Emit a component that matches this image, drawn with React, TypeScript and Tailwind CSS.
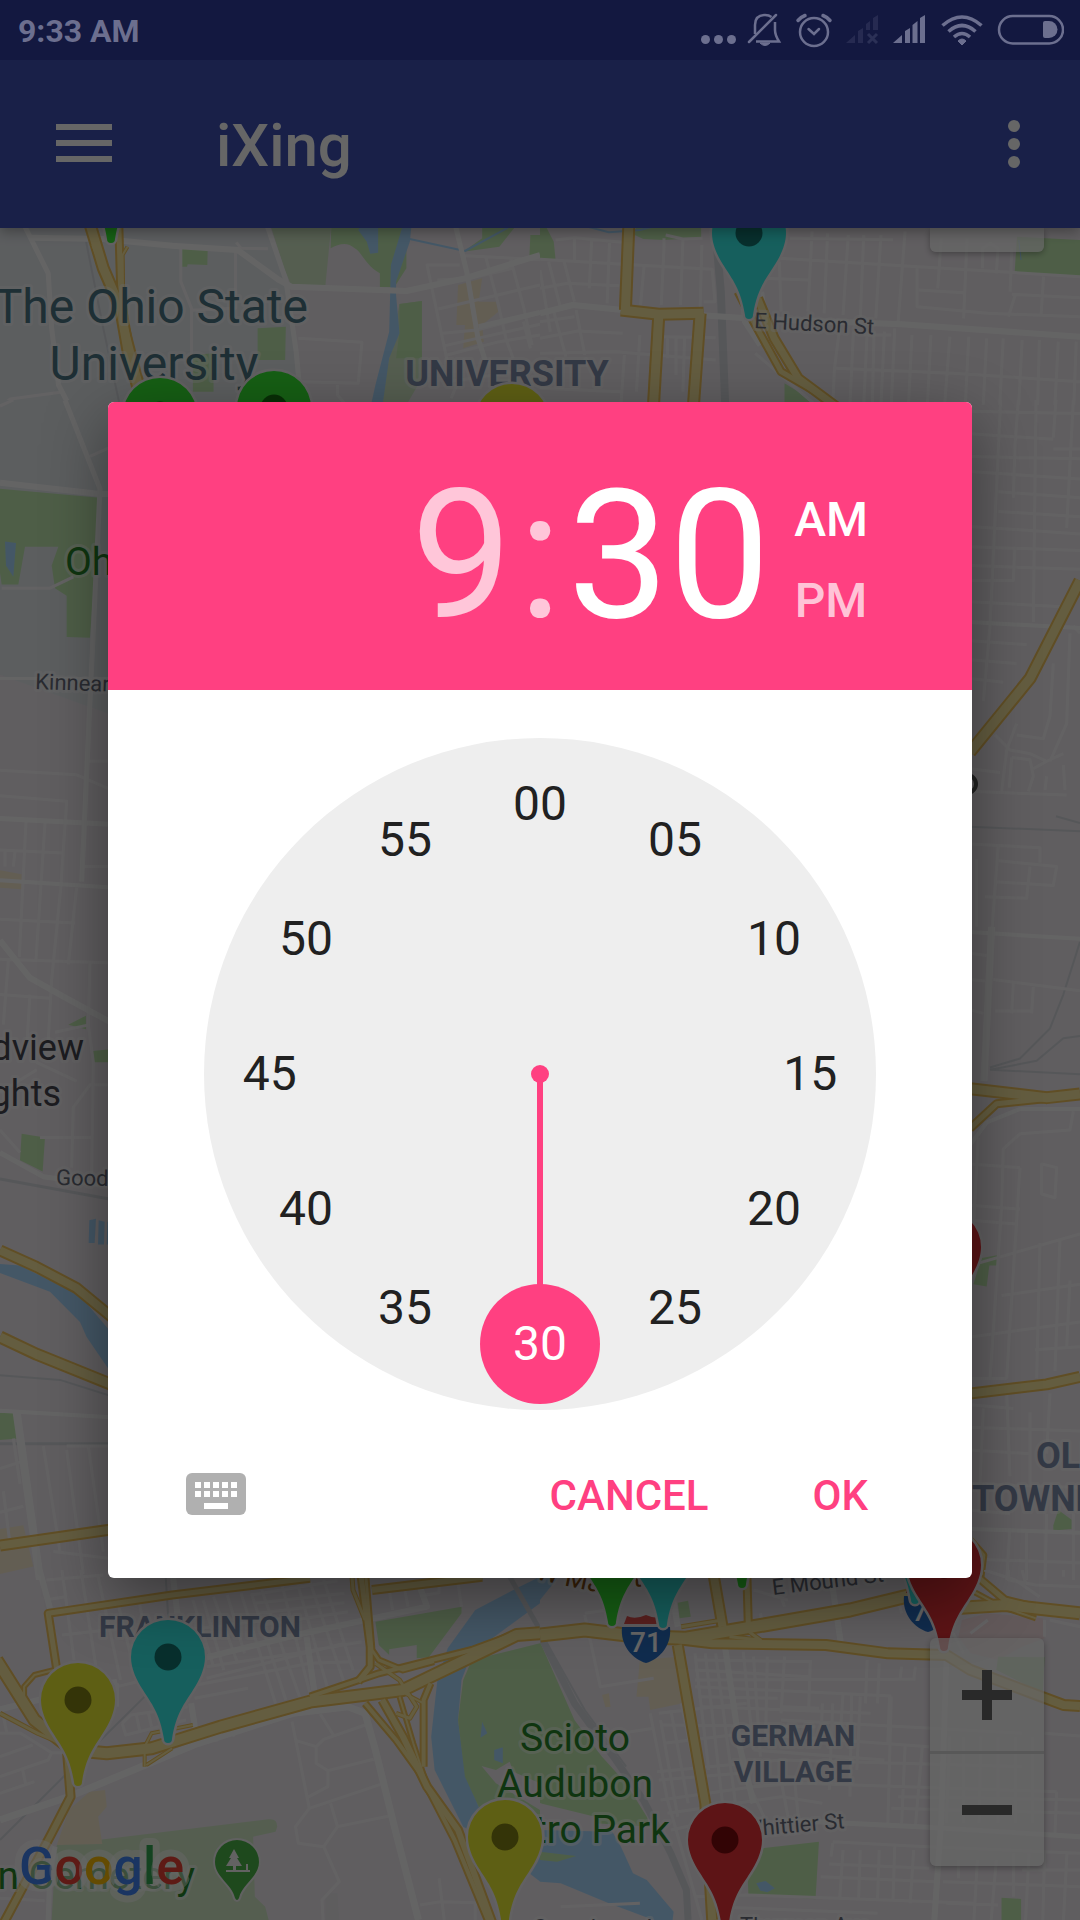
import React from "react";

const WATER = "#aadaff";
const PARK = "#c3ecb2";
const LAWN = "#d4ebc9";
const BEIGE = "#f7ead0";
const RAIL = "#d6dadf";

type Stroke = [string, number];
type Area = [string, string];
type TileData = {
  transform: string;
  clip: [number, number];
  areas: Area[];
  rails: Stroke[];
  water: Stroke[];
  minor: string[];
  streets: Stroke[];
  highways: Stroke[];
};

const northWest: TileData = {
  transform: "translate(0 225) scale(0.3444 0.3333)",
  clip: [1568, 620],
  areas: [
    ["M0 0H780L840 190L870 490L880 620H0Z", "#e6eaee"],
    ["M785 0H962L945 180H845L825 130Z", LAWN],
    ["M962 0H1180V130L1145 187H1103V145C1060 120 1050 80 1030 70C1010 50 985 55 960 70Z", PARK],
    ["M1040 15L1050 0H1098V83L1075 86L1065 50Z", WATER],
    ["M1160 237L1225 228V460L1180 540H1100L1130 400Z", LAWN],
    ["M1160 237L1225 228V400H1150L1160 320Z", PARK],
    ["M1170 0H1195L1190 50L1150 170V210L1160 325L1130 400L1100 620H1060L1090 480L1130 320L1135 120Z", WATER],
    ["M527 70L603 75L602 120L545 118L543 125H527Z", PARK],
    ["M748 310L830 305L828 405H748Z", PARK],
    ["M560 390L620 385V500H560Z", PARK],
    ["M1345 80L1400 40V0H1500L1450 65Z", PARK],
    ["M1540 30H1568V97H1537Z", PARK],
    ["M1330 180L1400 160L1390 230H1440L1447 260L1400 300L1405 350L1345 370L1350 300L1325 300Z", BEIGE],
  ],
  rails: [["M250 50L300 310L360 600", 2]],
  water: [["M1190 42L1350 78L1475 8", 2]],
  minor: [
    "M686 52L700 70L778 71M525 68V170L556 250V400M684 80V250L556 256M866 340L1051 352L1040 475L866 470M980 480V510L1000 535",
    "M1335 120H1240L1305 440M1270 165L1365 160L1488 130M1273 252L1568 180M1286 325L1385 315L1568 265M1292 362L1568 298M1298 390L1450 350L1568 330",
    "M1350 92L1568 104M1410 95L1445 230L1470 345L1490 400M1482 100L1520 245L1545 360M1520 290L1540 370M1300 470L1568 430M1310 520L1330 470",
    "M0 545L30 522L175 502",
  ],
  streets: [
    ["M90 38L300 42L500 62L690 75L810 165L845 185L1180 198L1350 160L1568 90", 6],
    ["M70 0L140 145L150 310L170 480L230 600", 5],
    ["M775 0L830 165L860 380L880 600", 5],
    ["M1322 0L1355 140L1388 340L1410 410", 5],
    ["M1390 305L1568 262", 5],
  ],
  highways: [
    ["M262 0L300 130L350 250L372 380L430 600", 13],
    ["M345 0L350 180L362 300L392 420L440 600", 9],
    ["M268 60L330 220L365 330", 4],
    ["M370 65L356 90L358 260", 4],
  ],
};

const northEast: TileData = {
  transform: "translate(540 225) scale(0.3444 0.3333)",
  clip: [1568, 620],
  areas: [
    ["M0 0H15L40 50L45 102H0Z", PARK],
    ["M280 0H468V38L360 45L300 42L275 30Z", PARK],
    ["M1385 35L1568 45V155L1378 145Z", PARK],
    ["M710 475L750 500L800 545H710Z", PARK],
  ],
  rails: [["M510 20L525 200L540 600", 8]],
  water: [
    ["M40 5L120 0L200 22L290 15L340 2", 2],
    ["M1390 45L1397 105", 1],
  ],
  minor: [
    "M365 30L415 42L472 40M360 40V70M45 45L100 38L240 52M100 40V105M150 45L143 190M202 50L195 235M0 103L240 118L500 133L508 230H475M302 125L292 240M360 70L352 240M415 45L408 240M470 60L465 250",
    "M0 190L80 175L230 182M25 110L60 250M70 110L100 230M0 135L30 320M0 290L100 275M0 340L110 318L240 325M40 260L75 395M105 255L130 390M0 385L220 380L510 405M360 335L510 338M0 490L235 500M290 330L280 500M370 335V400M395 335V450M420 335L415 500M245 390L235 540",
    "M725 40L1025 44M790 20L778 260M835 25L825 265M895 30L880 270M940 30L930 280M990 30L975 280M1060 20L1040 290M695 100L1050 122L1568 155M645 160L780 165M695 110L700 260",
    "M1165 40L1155 190M1240 40L1230 280M1095 130V245L1300 265L1568 275M1100 195L1230 203M1285 130V70L1308 55L1330 70L1325 145M1370 70L1365 200M1370 208L1568 218M1462 155L1455 270M1360 275L1380 210",
    "M870 310L855 430L850 540M910 320L900 540M950 320L940 540M970 320L965 540M1000 320L990 540M1030 310L1020 540M1080 330L1070 540M1135 330L1125 540M1190 335L1175 540M1245 335L1235 540M1297 340L1287 540M1345 340L1335 540M1400 345L1390 540M1450 345L1445 540M1505 350L1495 540M1557 350L1550 540M860 430L1200 445L1568 470M940 330H1020M625 385L800 540",
  ],
  streets: [
    ["M0 265L95 240L240 255L600 280", 6],
    ["M590 200L595 290L640 360", 6],
    ["M645 200L655 290", 4],
    ["M600 280L1050 298L1568 335", 6],
  ],
  highways: [
    ["M258 0L248 255", 13],
    ["M235 255L345 268L475 265", 13],
    ["M345 268L325 620", 13],
    ["M465 265L440 620", 13],
    ["M575 200L620 290L700 440L800 500L930 600", 9],
    ["M632 220L680 340L750 460L880 560", 11],
  ],
};

const west: TileData = {
  transform: "translate(0 400) scale(0.3333 0.7526)",
  clip: [345, 1568],
  areas: [
    ["M0 0H345V420L0 365Z", "#e6eaee"],
    ["M0 118L300 130L270 316L200 315V260L165 250L155 220L175 195H75L55 245H5L0 230Z", PARK],
    ["M15 188L48 190L40 235L18 220Z", WATER],
    ["M0 625L65 630V650L0 648Z", BEIGE],
    ["M65 975L135 980L128 1025L60 1010Z", PARK],
    ["M205 830L258 818V836Z", PARK],
    ["M278 865L345 862V880H278Z", PARK],
    ["M0 1148L60 1150L240 1190L345 1245V1300L260 1245L240 1225L150 1185L0 1160Z", WATER],
    ["M268 1090L288 1088L284 1120H266ZM296 1090L314 1092L312 1122H294ZM322 1092H345V1122H320Z", WATER],
    ["M0 1346L40 1345L55 1380L0 1382Z", PARK],
    ["M0 1500L70 1495L100 1550L0 1560Z", BEIGE],
  ],
  rails: [
    ["M0 1035L345 1063", 3],
    ["M0 1296L180 1302L345 1325", 2],
    ["M0 1387H345", 3],
  ],
  water: [],
  minor: [
    "M0 492L230 498L345 520M0 526L200 533L182 650L155 770L145 850M0 598L190 602M78 560L58 740M135 562L108 745M0 690L225 695M0 743L345 748M230 648L205 750M265 480H345M248 620H345M0 790L150 795M25 745L10 830M90 790L80 860M165 840L270 830M270 745L265 830L280 880L275 1040M215 1020L220 940L270 910H345M110 880L230 905M0 920L110 890M120 980H275M0 970L60 1000",
    "M5 250H150L220 235M15 600V620M45 600L40 620M0 1420L70 1410M130 1390L180 1530M200 1395L250 1560M265 1390L310 1530M200 1390H345M0 1478L70 1470M10 1450L30 1520M40 1380L60 1440M160 1530L345 1540M345 60L270 75",
    "M40 0L0 8",
  ],
  streets: [
    ["M0 110L300 125H345", 6],
    ["M195 0L300 118L270 400L245 640", 5],
    ["M0 556L345 564", 5],
    ["M0 370H345", 3],
    ["M0 638L345 648", 4],
    ["M0 718L90 768L200 795L345 830", 6],
    ["M0 1000L130 1032L345 1045", 5],
    ["M50 1345L120 1568", 8],
    ["M0 1343L345 1352", 4],
  ],
  highways: [
    ["M0 1130L110 1152L230 1180L345 1222", 12],
    ["M0 1245L110 1268L345 1310", 13],
    ["M0 1522L345 1500", 12],
  ],
};

const east: TileData = {
  transform: "translate(970 400) scale(0.3333 0.7526)",
  clip: [330, 1568],
  areas: [
    ["M10 1175L35 1140L85 1136V1150H58L50 1178Z", PARK],
    ["M250 1495L265 1475L305 1488V1500L250 1502Z", PARK],
  ],
  rails: [
    ["M0 567L330 573M258 553L330 562", 2],
    ["M60 887L150 875L240 835L280 790L330 720M60 890L200 878L280 848L330 845M60 890L330 896", 2],
  ],
  water: [],
  minor: [
    "M92 0L60 300L40 400M145 0L135 60L130 130M198 0L190 295M258 0L250 50M0 15L330 18M0 45L250 52M250 65H330M0 75L330 78M0 95L330 105M85 122L330 130M85 148L330 155M0 168L330 178M0 195L330 200M0 220L330 225M135 195L130 240H0M0 268L290 275M290 170L310 0M0 320L170 325M0 345L140 350M0 370L100 375",
    "M75 445L120 465L180 470L230 480L280 470M95 520L110 465L140 430M125 475L180 478L190 500L175 520M125 475L118 515M190 490L230 480M230 500L225 518M0 520L290 525M300 310L290 430L240 480M310 300L330 310M250 350L240 420L220 450L140 445M0 490L90 495M280 485L285 518",
    "M0 590L210 595V615M85 590L65 710M80 612L260 620L250 645L75 640M180 620L170 662L45 660M20 610V700M0 735L50 738M0 770L45 772M70 770L330 785M130 775L125 815M190 780L185 815M75 812H185M0 810L40 815",
    "M310 945L300 970L150 975L100 995L95 1070L80 1170L60 1300M150 1020L130 1160L110 1300M215 1015L260 1020L255 1060L215 1055ZM0 1015L150 1020M0 1070L150 1075M0 1090L140 1095M25 980L10 1100M0 1150L330 1108M210 1120L200 1300M270 1115L255 1290M95 1190L330 1175M0 1245L330 1225M300 1170L290 1260M195 1262L330 1258M0 1300H110",
    "M0 1335L130 1340M110 1320L120 1430M180 1345V1440M240 1320L230 1400M0 1365L330 1370M40 1340L30 1440M0 1395L180 1400M0 1440L330 1445M0 1475L120 1480M120 1500L110 1568M230 1480L225 1568M310 1480V1568M0 1540L330 1545M170 1505V1568",
  ],
  streets: [
    ["M0 295L330 303", 4],
    ["M0 707L330 716", 4],
    ["M65 700L42 905", 7],
    ["M0 990L50 960L150 942H330", 4],
    ["M0 1500L330 1505", 4],
  ],
  highways: [
    ["M0 468L180 370L330 240", 13],
    ["M0 915L230 927L330 922", 13],
    ["M0 968L80 935L230 928", 9],
    ["M0 1320L230 1308L330 1298", 12],
    ["M0 1515L40 1535L30 1568", 8],
  ],
};

const southWest: TileData = {
  transform: "translate(0 1570) scale(0.3444 0.3333)",
  clip: [1568, 1050],
  areas: [
    ["M1090 155L1340 110V130L1245 262L1210 265V225L1130 238V255L1100 225Z", PARK],
    ["M1568 20L1500 55L1380 120L1300 235L1270 330L1252 500L1262 600L1345 770L1400 800L1568 935V640L1390 710L1350 600L1330 450L1340 330L1370 250L1568 100Z", WATER],
    ["M1370 270L1568 220V790L1480 720L1390 710L1350 620L1330 450L1345 330Z", PARK],
    ["M1398 588L1440 600L1480 575L1490 605L1568 640V720L1440 640Z", "#f0eaf0"],
    ["M1400 455L1415 490L1395 503ZM1435 540L1460 532V580L1435 570Z", WATER],
    ["M165 825L780 748Q805 745 805 770L800 785L735 800L740 980L770 1010L780 1050H150L158 900Z", LAWN],
    ["M260 665L305 660L310 710L285 740L297 822L165 825L200 720Z", BEIGE],
    ["M945 970L980 970L985 1050H945Z", "#ebe9ec"],
  ],
  rails: [
    ["M480 0L490 170M420 380L180 625L0 810", 2],
    ["M1480 20L1568 180", 5],
  ],
  water: [],
  minor: [
    "M135 30L300 15M145 88L190 80M180 195L310 180M180 0L215 270M235 0L280 300M285 20L350 330M340 90L390 300M405 100L440 290M560 90L620 290M590 90L650 300M620 80L690 280M660 75L710 250M700 70L800 400M730 70L830 390M760 60L870 380M820 50L900 370M865 45L950 350M900 35L1000 340M940 30L1025 300",
    "M730 75L980 32M740 100L1000 70M750 130L1000 98M760 165L1010 125M540 180L860 140M600 290L860 250L1050 215M570 345L900 280L1020 275M600 325L1000 220M565 385L720 355M340 350L420 330M355 460L380 435L545 410M355 460L365 495L540 450M395 430L405 480M430 425L440 470M470 420L480 450",
    "M620 485L630 515M670 475L680 500M1330 40L1340 110M1130 60L1140 120M1175 60L1185 110M1235 75L1275 68V45M0 560L95 525M0 490L60 490L150 548L140 570L0 620M65 595L75 645M0 670L100 635M10 440L20 490M150 548H190",
    "M848 455L898 715L858 770L866 820L940 830L985 935L935 990L938 1050M860 512L918 530V580L952 602V650L893 682M918 530L940 508L1060 465M952 602L1085 568M930 432L968 495M898 715L1105 643M960 700L980 770L940 830M980 770L1130 738M1275 925L1290 1050M1220 1005L1280 995L1380 998V1050M0 985L130 992",
  ],
  streets: [
    ["M115 0L145 115", 6],
    ["M500 0L515 130M555 400L575 530", 6],
    ["M0 418L130 385L340 335", 6],
    ["M340 340V410", 4],
    ["M600 262L860 195L1240 110L1215 40", 6],
    ["M890 200L912 360", 6],
    ["M0 750L200 680L575 520L850 430L1010 410L1060 430L1090 540L1150 790L1215 1050", 7],
    ["M160 830L145 900L140 1050", 5],
  ],
  highways: [
    ["M165 300L140 130L500 75L900 25", 9],
    ["M175 295L100 315L70 350V400L150 500", 6],
    ["M-10 270L100 450L210 540L310 550L440 535L640 470L900 395L1170 360L1270 310L1500 195L1568 190", 14],
    ["M900 380L1100 310L1370 240L1500 190", 8],
    ["M0 430L110 490L200 530", 5],
    ["M195 550L205 680L150 790L0 1080", 10],
    ["M1060 -10L1080 240L1100 270L1170 300L1260 275", 7],
    ["M1045 -10L1075 230L1075 290L1040 335", 9],
    ["M1020 -10L1025 60L1060 150", 5],
    ["M1080 60L1400 20", 10],
    ["M1090 280L1160 330L1210 410L1190 445L1150 430", 5],
    ["M1060 400L1150 510L1220 610L1320 810L1420 1060", 8],
    ["M1110 390L1170 500L1240 650L1330 780L1430 1060", 10],
    ["M1160 380L1200 520L1235 630", 6],
    ["M1250 340L1230 390V590", 8],
    ["M1175 370L1230 400", 4],
    ["M560 465L440 490L420 530V590M500 535L425 585", 4],
  ],
};

const southEast: TileData = {
  transform: "translate(540 1570) scale(0.3444 0.3333)",
  clip: [1568, 1050],
  areas: [
    ["M0 0H70L0 90Z", WATER],
    ["M0 215L100 450L180 560L250 640L310 740L320 770L160 760L0 700Z", PARK],
    ["M0 700L160 740L170 780L0 790Z", "#f0eaf0"],
    ["M0 780L210 785L235 830L270 910L310 930L388 1025L385 1050H330L200 1000L60 940L0 935Z", WATER],
    ["M0 845L105 858L50 875L0 870Z", PARK],
    ["M400 98L430 92L438 140L405 145Z", PARK],
    ["M290 270L400 260L415 400L320 420L315 380H280Z", BEIGE],
    ["M180 375L200 370L205 410L190 412Z", BEIGE],
    ["M600 840L810 815L800 988L605 972Z", PARK],
    ["M628 940L655 933L682 955L660 967L640 962Z", WATER],
    ["M1340 983L1397 987V1050H1340Z", PARK],
    ["M1225 150L1300 130L1460 145L1465 205L1400 230L1330 270L1250 250L1215 200Z", "#f4dfe2"],
    ["M1330 260L1465 262L1460 370L1325 300Z", PARK],
  ],
  rails: [
    ["M0 195L100 400L220 570L300 690L380 850L425 960L430 1050", 7],
    ["M15 210L130 420L250 590", 2],
  ],
  water: [],
  minor: [
    "M130 135L175 350L330 325M130 130L230 115M235 490L330 475M60 1010L290 1000M450 250L490 600M480 250L530 700M510 250L570 720M590 245L620 540M620 260L640 560M660 260L655 510M710 260L700 430M785 270L780 420M820 400L815 520M850 400L840 660M880 370L870 520M905 370L900 680M930 380L920 600M950 270L945 400M985 280L980 400M1015 380L1010 520M1050 290L1045 330M1090 290L1085 330",
    "M450 270L790 275M450 300L780 320M450 330L1090 328M450 350L1020 378M460 380L690 385M705 410L810 415M470 410L960 430M345 430L600 400M350 465L800 470M700 450L1400 490M360 520L600 490L1130 530M620 540L1000 570M340 605L700 570L1400 590M345 630L580 610M350 690L620 650L760 640L1500 665M370 730L700 680L820 700M380 780L560 740M1020 380L1010 760M1060 530L1050 760M1110 530L1090 770",
    "M320 430L370 690L440 940L470 1050M380 420L430 700M410 400L470 700M350 450L400 740M590 720L620 820M610 650L650 740M700 630L720 740M740 640L750 740M1020 715L1568 730M1040 680L1568 690M1190 500L1180 760M1230 500V760M1280 500L1275 760M1330 500V760M1380 500V760M1430 500V760M1465 490L1568 498M1500 665L1495 800",
    "M840 882L1130 895M815 920L1150 935M850 815L1080 828L1568 850M850 820L845 860M880 840L870 990M930 840L925 990M985 840L980 990M1030 830L1025 990M1085 840L1075 1000M1215 870V925M1270 870L1260 1050M1325 870L1310 1050M1375 850V980M1420 850L1410 1050M1465 850L1460 1050M1530 850L1520 1050M1170 935L1568 950M1180 1000L1330 1005M600 975L1260 1000M500 1010L980 1030M450 980L600 975M1400 900H1568",
    "M1290 0L1380 30L1450 80M1360 0V30L1440 45L1568 50M1465 130L1500 140M1465 150V200M1480 150L1568 170M1400 0L1410 40M1520 0V20M1300 150L1250 190M1200 190L1230 250",
    "M640 130L650 180M1040 90L1050 130M700 80L710 110M390 100L400 150M620 60L720 90",
  ],
  streets: [
    ["M845 20L875 230", 6],
    ["M535 215L580 530L620 700", 6],
    ["M1180 270L1165 750L1145 1050", 6],
    ["M700 750L1100 770L1568 800", 5],
    ["M385 80L400 170", 6],
  ],
  highways: [
    ["M0 195L130 180L290 200L420 205L650 165L900 120L1080 75", 15],
    ["M380 205L500 220L830 225L1010 250L1180 255L1250 300L1430 370L1520 405L1568 408", 12],
    ["M500 -10L530 170", 12],
    ["M600 -10L605 170", 9],
    ["M410 170L530 150", 5],
    ["M400 225L480 700L500 1050", 12],
    ["M550 200L640 210L600 180", 5],
    ["M1200 115L1350 105L1568 130", 14],
    ["M1270 20L1350 90L1470 120", 9],
    ["M1250 60L1340 110L1440 145", 6],
    ["M1090 85L1100 110", 6],
  ],
};

const tiles = [northWest, northEast, west, east, southWest, southEast];

function Line({ d, w, color }: { d: string; w: number; color: string }) {
  return (
    <path d={d} fill="none" stroke={color} strokeWidth={w} strokeLinejoin="round" vectorEffect="non-scaling-stroke" />
  );
}

function Tile({ tile, id }: { tile: TileData; id: string }) {
  return (
    <g transform={tile.transform} clipPath={`url(#${id})`}>
      <clipPath id={id}>
        <rect width={tile.clip[0]} height={tile.clip[1]} />
      </clipPath>
      {tile.areas.map(([d, fill], i) => <path key={i} d={d} fill={fill} />)}
      {tile.rails.map(([d, w], i) => <Line key={i} d={d} w={w} color={RAIL} />)}
      {tile.water.map(([d, w], i) => <Line key={i} d={d} w={w} color={WATER} />)}
      {tile.minor.map((d, i) => <Line key={i} d={d} w={3} color="#f8f6f8" />)}
      {tile.streets.map(([d, w], i) => <Line key={i} d={d} w={w} color="#fbfbfb" />)}
      {tile.highways.map(([d, w], i) => <Line key={i} d={d} w={w} color="#efc35c" />)}
      {tile.highways.map(([d, w], i) => <Line key={i} d={d} w={w < 6 ? w - 2 : w - 4} color="#fbe9a0" />)}
    </g>
  );
}

const PIN = {
  red: ["#e83237", "#7d0a0d"],
  green: ["#37ee34", "#14750f"],
  teal: ["#37eee8", "#147570"],
  yellow: ["#ecee32", "#828216"],
} as const;

function Pin({ x, y, color }: { x: number; y: number; color: keyof typeof PIN }) {
  const [body, dot] = PIN[color];
  return (
    <g transform={`translate(${x} ${y})`}>
      <path
        d="M-37 0A37 37 0 0 1 37 0C37 12 31 24 25 33C17 46 8 56 4 82A4 4 0 0 1 -4 82C-8 56 -17 46 -25 33C-31 24 -37 12 -37 0Z"
        fill={body}
        stroke="#f6f2f6"
        strokeWidth="5"
        paintOrder="stroke"
      />
      <circle r="13.5" fill={dot} />
    </g>
  );
}

const labelKinds = {
  campus: { size: 48, fill: "#4b7684", weight: 400 },
  district: { size: 36, fill: "#808ead", weight: 700 },
  village: { size: 30, fill: "#808ead", weight: 700 },
  park: { size: 39, fill: "#27842a", weight: 400 },
  town: { size: 36, fill: "#464751", weight: 400 },
  street: { size: 22, fill: "#686c7a", weight: 400 },
  place: { size: 26, fill: "#915514", weight: 400 },
} as const;

function Label({ x, y, kind, anchor = "start", rotate = 0, children }: {
  x: number; y: number; kind: keyof typeof labelKinds; anchor?: "start" | "middle" | "end"; rotate?: number; children: string;
}) {
  const k = labelKinds[kind];
  return (
    <text
      transform={`translate(${x} ${y}) rotate(${rotate})`}
      fontSize={k.size}
      fontWeight={k.weight}
      fill={k.fill}
      stroke="#ffffff"
      strokeOpacity="0.45"
      strokeWidth="6"
      strokeLinejoin="round"
      paintOrder="stroke"
      textAnchor={anchor}
    >
      {children}
    </text>
  );
}

function Shield({ x, y }: { x: number; y: number }) {
  return (
    <g transform={`translate(${x} ${y})`}>
      <path d="M2 9L5 1Q13 5 24 0Q35 5 43 1L46 9Z" fill="#e0504f" />
      <path d="M0 12H48C50 30 38 44 24 48C10 44 -2 30 0 12Z" fill="#2a6fc4" />
      <text x="24" y="37" fontSize="28" fontWeight="500" fill="#ffffff" textAnchor="middle">71</text>
    </g>
  );
}

function CityMap() {
  return (
    <svg
      className="absolute inset-0 h-full w-full"
      viewBox="0 228 1080 1692"
      preserveAspectRatio="xMidYMin slice"
      role="img"
      aria-label="Map of Columbus"
    >
      <rect y="228" width="1080" height="1692" fill="#f0eaf0" />
      {tiles.map((t, i) => <Tile key={i} tile={t} id={`tile-${i}`} />)}

      <Label x={308} y={323} kind="campus" anchor="end">The Ohio State</Label>
      <Label x={154} y={380} kind="campus" anchor="middle">University</Label>
      <Label x={507} y={386} kind="district" anchor="middle">UNIVERSITY</Label>
      <Label x={754} y={328} kind="street" rotate={3}>E Hudson St</Label>
      <Label x={65} y={575} kind="park">Ohio Stadium</Label>
      <Label x={35} y={689} kind="street" rotate={2}>Kinnear Rd</Label>
      <Label x={84} y={1060} kind="town" anchor="end">Grandview</Label>
      <Label x={61} y={1106} kind="town" anchor="end">Heights</Label>
      <Label x={56} y={1185} kind="street" rotate={1}>Goodale Blvd</Label>
      <Label x={1036} y={1468} kind="district">OLDE</Label>
      <Label x={972} y={1511} kind="district">TOWNE</Label>
      <Label x={200} y={1637} kind="village" anchor="middle">FRANKLINTON</Label>
      <Label x={575} y={1751} kind="park" anchor="middle">Scioto</Label>
      <Label x={575} y={1797} kind="park" anchor="middle">Audubon</Label>
      <Label x={670} y={1843} kind="park" anchor="end">Metro Park</Label>
      <Label x={793} y={1746} kind="village" anchor="middle">GERMAN</Label>
      <Label x={793} y={1782} kind="village" anchor="middle">VILLAGE</Label>
      <Label x={845} y={1828} kind="street" anchor="end" rotate={-5}>Whittier St</Label>
      <Label x={773} y={1595} kind="street" rotate={-7}>E Mound St</Label>
      <Label x={535} y={1579} kind="place" rotate={12}>W Main</Label>
      <Label x={618} y={1588} kind="place" rotate={-4}>St</Label>
      <Label x={533} y={1935} kind="street">Greenlawn Ave</Label>
      <Label x={740} y={1933} kind="street">Thurman Ave</Label>
      <Label x={195} y={1889} kind="park" anchor="end">Green Lawn Cemetery</Label>
      <circle cx="967" cy="784" r="9" fill="none" stroke="#555555" strokeWidth="4" />

      <Shield x={622} y={1615} />
      <Shield x={904} y={1584} />

      <Pin x={111} y={157} color="green" />
      <Pin x={749} y={233} color="teal" />
      <Pin x={160} y={415} color="green" />
      <Pin x={274} y={408} color="green" />
      <Pin x={512} y={421} color="yellow" />
      <Pin x={944} y={1247} color="red" />
      <Pin x={742} y={1502} color="green" />
      <Pin x={915} y={1518} color="teal" />
      <Pin x={612} y={1540} color="green" />
      <Pin x={663} y={1542} color="teal" />
      <Pin x={944} y={1565} color="red" />
      <Pin x={168} y={1657} color="teal" />
      <Pin x={78} y={1700} color="yellow" />
      <Pin x={505} y={1837} color="yellow" />
      <Pin x={725} y={1840} color="red" />

      <g transform="translate(237 1862)">
        <path
          d="M-22 0A22 22 0 0 1 22 0C22 15 5 22 2 36Q0 40 -2 36C-5 22 -22 15 -22 0Z"
          fill="#4db64a"
          stroke="#f2f2f2"
          strokeWidth="4"
          paintOrder="stroke"
        />
        <path d="M-3 -13L-8 -4H-6L-11 4H-4V8H-11V10H13V8H11V2H9V8H-1V4H5L0 -4H2Z" fill="#f4f4f4" />
      </g>

      <text
        x="19"
        y="1884"
        fontSize="52"
        fontWeight="500"
        stroke="#ffffff"
        strokeOpacity="0.5"
        strokeWidth="14"
        strokeLinejoin="round"
        paintOrder="stroke"
      >
        <tspan fill="#4285f4">G</tspan>
        <tspan fill="#ea4335">o</tspan>
        <tspan fill="#fbbc05">o</tspan>
        <tspan fill="#4285f4">g</tspan>
        <tspan fill="#34a853">l</tspan>
        <tspan fill="#ea4335">e</tspan>
      </text>
    </svg>
  );
}

function StatusIcon({ x, w, children }: { x: number; w: number; children: React.ReactNode }) {
  return (
    <svg width={w} height="36" viewBox={`${x} 12 ${w} 36`} fill="none" stroke="currentColor" aria-hidden="true">
      {children}
    </svg>
  );
}

function StatusBar() {
  return (
    <div className="relative z-20 flex h-[60px] shrink-0 items-center justify-between bg-[#131840] pr-4 pl-[18px] text-[#6c6f8f]">
      <span className="mt-0.5 text-[32px] leading-none font-bold">9:33 AM</span>
      <div className="flex items-center">
        <StatusIcon x={700} w={46}>
          <g fill="currentColor" stroke="none">
            <circle cx="705.5" cy="39.5" r="4.5" />
            <circle cx="718.5" cy="39.5" r="4.5" />
            <circle cx="731.5" cy="39.5" r="4.5" />
          </g>
        </StatusIcon>
        <StatusIcon x={746} w={48}>
          <path d="M749 42L776 15" strokeWidth="2.5" strokeLinecap="round" />
          <path d="M755 34V25C755 18 759 15 765 15Q769 15 771.5 17M775 22V30Q775 35 779 41.5H756" strokeWidth="2.5" />
          <path d="M760 43H770Q765 48 760 43Z" fill="currentColor" />
        </StatusIcon>
        <StatusIcon x={794} w={50}>
          <circle cx="814" cy="32" r="14" strokeWidth="2.5" />
          <path d="M808.5 29L814 34L819 29" strokeWidth="2.5" strokeLinecap="round" />
          <path d="M798 20.5Q801 17 805 15.5M823 15.5Q827 17 830 20.5" strokeWidth="3.5" strokeLinecap="round" />
        </StatusIcon>
        <StatusIcon x={844} w={46}>
          <g fill="currentColor" stroke="none" opacity="0.22">
            <path d="M846 43L855 35V43ZM858 43V31L863 28V43ZM866 30V24L870 21V30ZM873 30V18L878 15V30Z" />
          </g>
          <path d="M868 34L877 43M877 34L868 43" strokeWidth="3" opacity="0.28" />
        </StatusIcon>
        <StatusIcon x={890} w={48}>
          <path d="M893 43L902 35V43ZM905 43V31L910 28V43ZM912.5 43V25L917.5 21V43ZM920 43V18L925 15V43Z" fill="currentColor" stroke="none" />
        </StatusIcon>
        <StatusIcon x={938} w={58}>
          <path d="M942.5 25.5Q962 8.5 981.5 25.5M948.5 31.5Q962 19.5 975.5 31.5M954 37Q962 30 970 37" strokeWidth="3.6" />
          <path d="M962 45L958 41Q962 37 966 41Z" fill="currentColor" />
        </StatusIcon>
        <StatusIcon x={996} w={68}>
          <rect x="999" y="16" width="64" height="27.5" rx="13.7" strokeWidth="2.5" />
          <path d="M1045 21H1049A8.500 8.500 0 0 1 1049 38H1045Q1043 38 1043 36V23Q1043 21 1045 21Z" fill="currentColor" stroke="none" />
        </StatusIcon>
      </div>
    </div>
  );
}

function AppBar() {
  return (
    <header className="relative z-10 flex h-[168px] shrink-0 items-center bg-[#3f51b5] px-14 text-white shadow-[0_4px_12px_rgba(0,0,0,0.3)]">
      <button type="button" aria-label="Open menu" className="-mt-0.5 flex w-14 flex-col gap-2.5">
        <span className="h-1.5 bg-white" />
        <span className="h-1.5 bg-white" />
        <span className="h-1.5 bg-white" />
      </button>
      <h1 className="mt-1 ml-26 flex-1 text-[60px] leading-none font-medium">iXing</h1>
      <button type="button" aria-label="More options" className="mr-1 flex flex-col gap-1.5">
        <span className="size-3 rounded-full bg-white" />
        <span className="size-3 rounded-full bg-white" />
        <span className="size-3 rounded-full bg-white" />
      </button>
    </header>
  );
}

function MapControls() {
  return (
    <>
      <div className="absolute top-0 right-9 h-6 w-[114px] rounded-b-md bg-white/70 shadow-[0_2px_6px_rgba(0,0,0,0.3)]" />
      <div className="absolute right-9 bottom-[54px] flex w-[114px] flex-col rounded-md bg-white/70 shadow-[0_2px_6px_rgba(0,0,0,0.3)]">
        <button type="button" aria-label="Zoom in" className="flex h-[116px] items-center justify-center border-b-3 border-[#dcdcdc]">
          <svg width="50" height="50" fill="#666666"><path d="M20 0H30V20H50V30H30V50H20V30H0V20H20Z" /></svg>
        </button>
        <button type="button" aria-label="Zoom out" className="flex h-28 items-center justify-center">
          <svg width="50" height="50" fill="#666666"><path d="M0 20H50V30H0Z" /></svg>
        </button>
      </div>
    </>
  );
}

const minutes = ["00", "05", "10", "15", "20", "25", "30", "35", "40", "45", "50", "55"];

function ClockDial() {
  return (
    <div className="relative mx-auto mt-12 aspect-square w-[672px] max-w-full rounded-full bg-[#eeeeee]">
      <svg className="absolute inset-0 h-full w-full" viewBox="0 0 672 672" aria-hidden="true">
        <path d="M336 336V560" stroke="#ff4081" strokeWidth="6" />
        <circle cx="336" cy="336" r="9" fill="#ff4081" />
        <circle cx="336" cy="606" r="60" fill="#ff4081" />
      </svg>
      {minutes.map((m, i) => {
        const a = (i * Math.PI) / 6;
        return (
          <button
            key={m}
            type="button"
            aria-pressed={m === "30"}
            className={
              m === "30"
                ? "absolute size-24 -translate-x-1/2 -translate-y-1/2 text-5xl text-white"
                : "absolute size-24 -translate-x-1/2 -translate-y-1/2 text-5xl text-[#212121]"
            }
            style={{ left: `${50 + 40.2 * Math.sin(a)}%`, top: `${50 - 40.2 * Math.cos(a)}%` }}
          >
            {m}
          </button>
        );
      })}
    </div>
  );
}

function KeyboardIcon() {
  return (
    <svg width="60" height="42" viewBox="0 0 60 42" aria-hidden="true">
      <rect width="60" height="42" rx="6" fill="#b0b0b0" />
      {[9, 18, 27, 36, 45].map((x) => (
        <g key={x} fill="#ffffff">
          <rect x={x} y="9" width="6" height="6" />
          <rect x={x} y="18" width="6" height="6" />
        </g>
      ))}
      <rect x="18" y="30" width="24" height="6" fill="#ffffff" />
    </svg>
  );
}

function TimePicker() {
  return (
    <div
      role="dialog"
      aria-label="Choose time"
      className="w-4/5 overflow-hidden rounded-md bg-white shadow-[0_20px_64px_rgba(0,0,0,0.42)]"
    >
      <div className="grid h-72 grid-cols-[1fr_auto_1fr] items-center gap-1.5 bg-[#ff4081] pt-5 text-[180px] leading-none text-white">
        <button type="button" aria-label="Hour 9" className="justify-self-end text-white/70">9</button>
        <span className="text-white/70">:</span>
        <div className="flex items-center">
          <button type="button" aria-label="Minute 30">30</button>
          <div className="ml-6 flex flex-col pt-2 text-5xl font-medium">
            <button type="button" aria-pressed="true" className="leading-[81px]">AM</button>
            <button type="button" aria-pressed="false" className="leading-[81px] text-white/70">PM</button>
          </div>
        </div>
      </div>
      <ClockDial />
      <div className="flex h-[168px] items-center pr-26 pl-[78px] text-[42px] font-medium text-[#ff4081]">
        <button type="button" aria-label="Switch to keyboard input">
          <KeyboardIcon />
        </button>
        <button type="button" className="ml-auto pt-1 leading-none">CANCEL</button>
        <button type="button" className="ml-26 pt-1 leading-none">OK</button>
      </div>
    </div>
  );
}

export default function App() {
  return (
    <div className="relative flex min-h-screen flex-col overflow-hidden bg-white font-['Roboto',sans-serif]">
      <StatusBar />
      <AppBar />
      <main className="relative flex-1">
        <CityMap />
        <MapControls />
      </main>
      <div className="absolute inset-0 z-10 flex items-center justify-center bg-black/60 pt-[60px]">
        <TimePicker />
      </div>
    </div>
  );
}
